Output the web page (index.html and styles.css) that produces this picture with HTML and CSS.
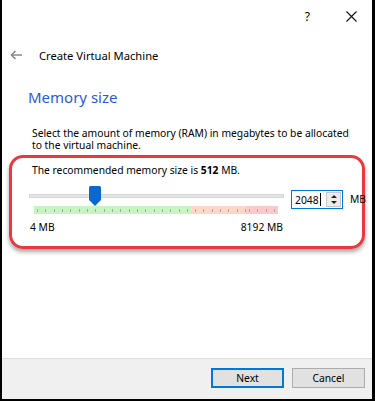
FILE: index.html
```html
<!DOCTYPE html>
<html lang="en">

<head>
    <meta charset="UTF-8">
    <meta name="viewport" content="width=device-width, initial-scale=1.0">
    <title>Create Virtual Machine</title>
    <link rel="stylesheet" href="styles.css">
</head>

<body>
    <div class="window">
        <div class="titlebar">
            <span class="help">?</span>
            <svg class="close" width="11" height="11" viewBox="0 0 11 11">
                <path d="M0.5 0.5 L10.5 10.5 M10.5 0.5 L0.5 10.5" stroke="#111" stroke-width="1.1" fill="none"/>
            </svg>
        </div>

        <div class="header">
            <svg class="back" width="12" height="10" viewBox="0 0 12 10">
                <path d="M12 5 H1.5 M5.5 1 L1.5 5 L5.5 9" stroke="#8a8a8a" stroke-width="1.6" fill="none"/>
            </svg>
            <span class="wizard-title">Create Virtual Machine</span>
        </div>

        <div class="content">
            <h2>Memory size</h2>
            <p class="desc">Select the amount of memory (RAM) in megabytes to be allocated to the virtual machine.</p>

            <div class="highlight">
                <p class="recommended">The recommended memory size is <b>512</b> MB.</p>

                <div class="slider-row">
                    <div class="slider">
                        <div class="groove"></div>
                        <svg class="handle" style="left: 60px" width="12" height="20" viewBox="0 0 12 20">
                            <path d="M1.5 0 H10.5 Q12 0 12 1.5 V14 L6 20 L0 14 V1.5 Q0 0 1.5 0 Z" fill="#0b68cf"/>
                        </svg>
                        <div class="ticks">
                            <div class="seg green"></div>
                            <div class="seg orange"></div>
                            <div class="seg red"></div>
                        </div>
                    </div>

                    <div class="spinbox">
                        <span class="value">2048<span class="caret"></span></span>
                        <div class="spin">
                            <div class="arrow up"></div>
                            <div class="arrow down"></div>
                        </div>
                    </div>
                    <span class="unit">MB</span>
                </div>

                <div class="scale">
                    <span>4 MB</span>
                    <span>8192 MB</span>
                </div>
            </div>
        </div>

        <div class="footer">
            <button class="btn primary">Next</button>
            <button class="btn">Cancel</button>
        </div>
    </div>
</body>

</html>
```

FILE: styles.css
```css
body {
    margin: 0;
    padding: 0;
    font-family: 'Noto Sans', 'Open Sans', sans-serif;
    font-size: 10.3px;
    color: #000;
    background-color: #fff;
}

.window {
    width: 375px;
    height: 401px;
    box-sizing: border-box;
    border-left: 2px solid #000;
    border-right: 3px solid #000;
    border-bottom: 2px solid #000;
    display: flex;
    flex-direction: column;
}

/* title bar */
.titlebar {
    height: 32px;
    display: flex;
    align-items: center;
    justify-content: flex-end;
    padding-right: 15px;
}

.help {
    font-size: 12px;
    margin-right: 36px;
}

/* wizard header */
.header {
    height: 46px;
    display: flex;
    align-items: center;
    padding-left: 8px;
}

.back {
    margin-right: 17px;
}

.wizard-title {
    font-size: 11.2px;
}

.content {
    padding: 0 7px;
    flex: 1;
}

h2 {
    font-size: 15px;
    font-weight: normal;
    line-height: 20px;
    color: #2a5bd4;
    margin: 9px 0 0 19px;
}

.desc {
    margin: 20px 0 0 23px;
    line-height: 12px;
    width: 322px;
}

/* red call-out box */
.highlight {
    margin-top: 4px;
    border: 3px solid #e8393f;
    border-radius: 14px;
    box-shadow: 0 3px 4px rgba(0, 0, 0, 0.35);
    padding: 6px 0 13px 20px;
}

.recommended {
    margin: 0;
    line-height: 12px;
}

.slider-row {
    display: flex;
    align-items: flex-start;
    margin: 10px 0 0 -3px;
}

.slider {
    position: relative;
    width: 255px;
    height: 28px;
    flex-shrink: 0;
}

.groove {
    margin-top: 8px;
    height: 2px;
    background-color: #e4e4e4;
    border: 1px solid #d6d6d6;
}

.handle {
    position: absolute;
    top: 0;
}

.ticks {
    margin: 8px 6px 0 5px;
    height: 8px;
    display: flex;
}

.seg {
    height: 100%;
    background-image: repeating-linear-gradient(90deg, #a9a9a9 0, #a9a9a9 1px, transparent 1px, transparent 8.33px);
    background-size: 100% 3px;
    background-position: 3px 3px;
    background-repeat: no-repeat;
}

.seg.green {
    width: 158px;
    background-color: #c8f3c3;
}

.seg.orange {
    width: 54px;
    background-color: #fcd6c6;
}

.seg.red {
    flex: 1;
    background-color: #fbc9ca;
}

.spinbox {
    margin: 4px 0 0 7px;
    width: 52px;
    height: 19px;
    flex-shrink: 0;
    box-sizing: border-box;
    border: 1px solid #0078d7;
    display: flex;
    align-items: center;
    justify-content: space-between;
    padding: 0 1px 0 3px;
}

.value {
    display: flex;
    align-items: center;
}

.caret {
    width: 1px;
    height: 13px;
    background-color: #000;
    margin-left: 1px;
}

.spin {
    width: 15px;
    height: 15px;
    box-sizing: border-box;
    border: 1px solid #c8c8c8;
    background-color: #ececec;
    display: flex;
    flex-direction: column;
    align-items: center;
    justify-content: center;
    gap: 3px;
}

.arrow {
    width: 0;
    height: 0;
    border-left: 3px solid transparent;
    border-right: 3px solid transparent;
}

.arrow.up {
    border-bottom: 3px solid #222;
}

.arrow.down {
    border-top: 3px solid #222;
}

.unit {
    margin: 7px 0 0 7px;
    line-height: 12px;
}

.scale {
    width: 255px;
    box-sizing: border-box;
    margin: 7px 0 0 -3px;
    padding: 0 1px;
    display: flex;
    justify-content: space-between;
    line-height: 12px;
}

/* bottom button bar */
.footer {
    height: 41px;
    box-sizing: border-box;
    border-top: 1px solid #dcdcdc;
    background-color: #f0f0f0;
    display: flex;
    justify-content: flex-end;
    align-items: flex-start;
    padding: 9px 7px 0 0;
    gap: 8px;
}

.btn {
    width: 73px;
    height: 20px;
    box-sizing: border-box;
    border: 1px solid #adadad;
    background-color: #e1e1e1;
    font-family: 'Noto Sans', 'Open Sans', sans-serif;
    font-size: 10.3px;
    color: #000;
    padding: 0;
}

.btn.primary {
    border: 2px solid #0078d7;
}
```
